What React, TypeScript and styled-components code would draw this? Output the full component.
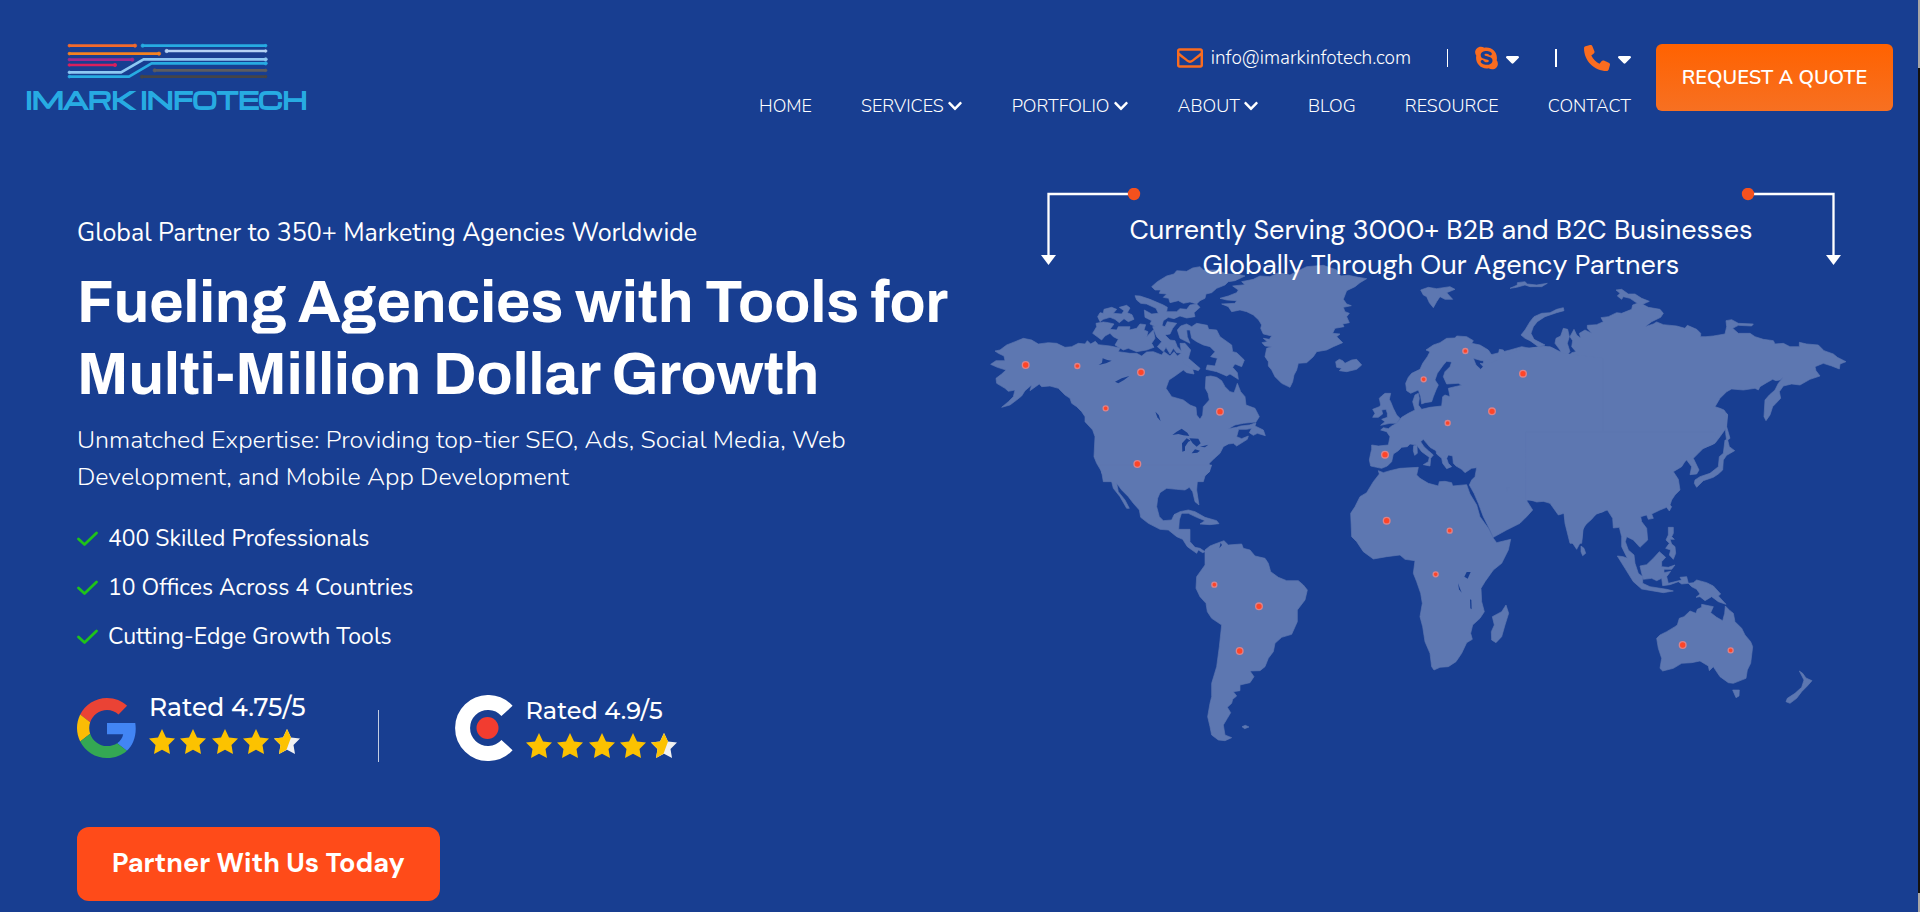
import React from "react";
import styled, { createGlobalStyle } from "styled-components";
import { FaSkype, FaPhone, FaCaretDown } from "react-icons/fa6";
import { FaChevronDown, FaRegEnvelope } from "react-icons/fa";

const colors = {
  page: "#183e91",
  land: "#5d77b1",
  orange: "#fa6c1f",
  cta: "#ff4b19",
  white: "#ffffff",
  check: "#1fc31a",
  star: "#fcc200",
  brand: "#27abe2",
};

const bodyFont = `"Nunito", "Nunito Sans", "Open Sans", "Noto Sans", sans-serif`;
const displayFont = `"DM Sans", Inter, sans-serif`;

const GlobalStyle = createGlobalStyle`
  * { box-sizing: border-box; }
  body {
    margin: 0;
    background: ${colors.page};
    color: ${colors.white};
    font-family: ${bodyFont};
  }
  h1, h2, p, ul { margin: 0; padding: 0; }
  ul { list-style: none; }
  a { color: inherit; text-decoration: none; }
  svg { display: block; flex-shrink: 0; }
`;

const Page = styled.div`
  min-height: 100vh;
  overflow: hidden;
`;

const ScrollTrack = styled.div`
  position: fixed;
  top: 0;
  right: 0;
  bottom: 0;
  width: 2px;
  background: #a9a7a6;
  padding: 68px 0 19px;
`;

const ScrollThumb = styled.div`
  height: 100%;
  background: #14120f;
`;

/* ---------- header ---------- */

const Header = styled.header`
  display: flex;
  align-items: flex-start;
  padding: 44px 27px 0 24px;
`;

const Brand = styled.a`
  display: flex;
  flex-direction: column;
  align-items: center;
  min-width: 285px;
  margin-right: auto;
`;

const BrandName = styled.span`
  font-family: Michroma, Orbitron, "DejaVu Sans", sans-serif;
  font-weight: 700;
  font-size: 23px;
  line-height: 24px;
  margin-top: 5px;
  color: ${colors.brand};
  -webkit-text-stroke: 1px ${colors.brand};
  white-space: nowrap;
`;

const HeaderMiddle = styled.div`
  display: flex;
  flex-direction: column;
  align-items: flex-end;
  margin-right: 25px;
`;

const ContactRow = styled.div`
  display: flex;
  align-items: center;
  height: 28px;
`;

const EmailLink = styled.a`
  display: flex;
  align-items: center;
  gap: 8px;
  font-size: 19px;
  font-weight: 300;
  line-height: 28px;
`;

const Separator = styled.span<{ $thin?: boolean }>`
  width: ${(p) => (p.$thin ? 1 : 2)}px;
  height: 18px;
  margin: 0 27px 0 36px;
  background: ${colors.white};
`;

const IconButton = styled.button`
  display: flex;
  align-items: center;
  gap: 8px;
  padding: 0;
  border: 0;
  background: none;
  color: ${colors.white};
`;

const SkypeIcon = styled(FaSkype)`
  width: 23px;
  height: 26px;
  color: ${colors.orange};
`;

const PhoneIcon = styled(FaPhone)`
  width: 26px;
  height: 26px;
  color: ${colors.orange};
`;

const Caret = styled(FaCaretDown)`
  width: 13px;
  height: 21px;
`;

const NavList = styled.ul`
  display: flex;
  gap: 49px;
  margin-top: 20px;
`;

const NavLink = styled.a`
  display: flex;
  align-items: center;
  gap: 3px;
  font-size: 18px;
  font-weight: 300;
  line-height: 28px;
`;

const QuoteButton = styled.button`
  width: 237px;
  height: 67px;
  border: 0;
  border-radius: 6px;
  background: linear-gradient(#ff6200, #f77022);
  color: ${colors.white};
  font-family: ${bodyFont};
  font-size: 20px;
  font-weight: 600;
  white-space: nowrap;
`;

/* ---------- hero ---------- */

const Hero = styled.main`
  display: grid;
  grid-template-columns: 903fr 875fr;
  padding: 0 65px 10px 77px;
  margin-top: 68px;
`;

const HeroCopy = styled.section`
  padding-top: 27px;
`;

const Kicker = styled.p`
  font-size: 25px;
  line-height: 36px;
`;

const Title = styled.h1`
  margin-top: 15px;
  font-family: Archivo, "Liberation Sans", Arial, sans-serif;
  font-size: 59px;
  font-weight: 700;
  line-height: 72px;
  white-space: nowrap;
`;

const Lead = styled.p`
  margin-top: 12px;
  font-size: 25px;
  font-weight: 300;
  line-height: 37px;
`;

const Perks = styled.ul`
  margin-top: 18px;
`;

const Perk = styled.li`
  display: flex;
  align-items: center;
  gap: 10px;
  font-size: 23px;
  line-height: 49px;
`;

const Ratings = styled.div`
  display: flex;
  align-items: center;
  margin-top: 32px;
`;

const Rating = styled.div`
  display: flex;
  align-items: center;
  gap: 12px;
`;

const RatingText = styled.div<{ $raised?: boolean }>`
  display: flex;
  flex-direction: column;
  gap: 8px;
  font-size: ${(p) => (p.$raised ? 25 : 24)}px;
  padding-bottom: ${(p) => (p.$raised ? 8 : 0)}px;
`;

const RatingLabel = styled.span`
  font-family: "Montserrat", Inter, sans-serif;
  font-weight: 500;
  line-height: 28px;
`;

const RatingDivider = styled.span`
  width: 1px;
  height: 52px;
  margin: 16px 76px 0 72px;
  background: #c3cde2;
`;

const PartnerButton = styled.button`
  width: 363px;
  height: 74px;
  margin-top: 65px;
  padding: 0 0 4px;
  border: 0;
  border-radius: 12px;
  background: ${colors.cta};
  color: ${colors.white};
  font-family: ${displayFont};
  font-size: 27px;
  font-weight: 700;
`;

const Reach = styled.section`
  min-width: 0;
`;

const ReachHead = styled.div`
  position: relative;
  z-index: 1;
  display: flex;
  justify-content: space-between;
  padding: 0 14px 0 61px;
`;

const ReachTitle = styled.h2`
  margin: 24px -60px 0;
  font-family: ${displayFont};
  font-size: 27px;
  font-weight: 400;
  line-height: 35px;
  text-align: center;
`;

const MapDrawing = styled.svg`
  width: 100%;
  height: auto;
  margin-top: -42px;
`;

const logoWires: [string, string, number, number][] = [
  ["#f26a2c", "M207 77H404", 404, 77],
  ["#f58220", "M207 101H476", 476, 101],
  ["#a02a8c", "M207 119H396", 396, 119],
  ["#d91f5d", "M207 135H344", 344, 135],
  ["#8ec7f2", "M207 157H362L430 118H796", 796, 118],
  ["#27abe2", "M207 170H386L454 130H796", 796, 130],
  ["#27abe2", "M427 77H796", 427, 77],
  ["#b5d3f5", "M499 93H796", 499, 93],
  ["#5d5c5e", "M463 151H796", 463, 151],
  ["#454446", "M425 170H796", 425, 170],
];

const LogoMark = () => (
  <svg width="200" height="38" viewBox="200 72 600 114" overflow="visible" aria-hidden="true">
    {logoWires.map(([c, d, x, y]) => (
      <g key={d} stroke={c} fill="none">
        <path d={d} strokeWidth="8" />
        <circle cx={x} cy={y} r="5" fill={c} strokeWidth="2" />
        <circle cx={d.startsWith("M207") ? 207 : 796} cy={d.startsWith("M207") ? +d.split(" ")[1].split("H")[0] : y} r="4" fill={c} strokeWidth="2" />
      </g>
    ))}
  </svg>
);

const Check = () => (
  <svg width="21" height="16" viewBox="0 0 21 16" aria-hidden="true">
    <path d="M1.5 8L7.5 13.5L19.5 2" fill="none" stroke={colors.check} strokeWidth="2.7" strokeLinecap="round" strokeLinejoin="round" />
  </svg>
);

const starPath = "M13 0L17 8.4L26 9.6L19.5 16L21 25L13 20.8L5 25L6.500 16L0 9.600L9 8.400Z";

const Stars = () => (
  <svg width="152" height="25" viewBox="0 0 152 25" role="img" aria-label="Star rating">
    {[0, 31, 63, 94].map((x) => (
      <path key={x} d={starPath} transform={`translate(${x} 0)`} fill={colors.star} />
    ))}
    <g transform="translate(125 0)">
      <path d={starPath} fill="#f1f1f1" />
      <path d="M13 0L17 8.400L12.500 20.800L5 25L6.500 16L0 9.600L9 8.400Z" fill={colors.star} />
    </g>
  </svg>
);

const GoogleLogo = () => (
  <svg width="60" height="60" viewBox="0 0 48 48" role="img" aria-label="Google">
    <path fill="#EA4335" d="M24 9.500c3.540 0 6.710 1.220 9.210 3.600l6.850-6.850C35.900 2.380 30.470 0 24 0 14.620 0 6.510 5.380 2.560 13.220l7.980 6.190C12.430 13.720 17.740 9.500 24 9.500z" />
    <path fill="#4285F4" d="M46.980 24.550c0-1.570-.15-3.090-.38-4.550H24v9.020h12.940c-.58 2.960-2.260 5.480-4.780 7.180l7.730 6c4.510-4.180 7.090-10.360 7.090-17.650z" />
    <path fill="#FBBC05" d="M10.530 28.590c-.48-1.450-.76-2.990-.76-4.590s.27-3.140.76-4.590l-7.980-6.190C.92 16.460 0 20.120 0 24c0 3.880.92 7.540 2.560 10.780l7.970-6.190z" />
    <path fill="#34A853" d="M24 48c6.480 0 11.930-2.130 15.890-5.810l-7.730-6c-2.150 1.450-4.920 2.300-8.160 2.300-6.260 0-11.570-4.220-13.470-9.910l-7.980 6.190C6.510 42.620 14.620 48 24 48z" />
  </svg>
);

const ClutchLogo = () => (
  <svg width="59" height="66" viewBox="0 0 59 66" role="img" aria-label="Clutch">
    <path d="M52 15.900A25.500 25.500 0 1 0 52 50.100" fill="none" stroke="#fff" strokeWidth="15" />
    <circle cx="32.500" cy="33" r="11" fill="#f23c30" />
  </svg>
);

const Bracket = ({ flip }: { flip?: boolean }) => (
  <svg width="100" height="78" viewBox="0 0 100 78" aria-hidden="true">
    <g transform={flip ? "translate(100 0) scale(-1 1)" : undefined}>
      <path d="M93 6H7.500V68" fill="none" stroke="#fff" strokeWidth="2.300" />
      <path d="M0 67H15L7.500 77Z" fill="#fff" />
      <circle cx="93" cy="6" r="6.200" fill="#f4511e" />
    </g>
  </svg>
);

/* Each region keeps its own origin and is drawn at three units per map pixel. */
type Region = {
  x: number;
  y: number;
  land: string[];
  water?: string[];
  pins: [number, number, 0 | 1][];
};

const regions: Region[] = [
  {
    x: 970,
    y: 170,
    land: [
      "75 543 90 540 110 525 135 515 160 505 185 510 205 522 235 518 260 520 285 532 305 530 325 520 345 522 352 512 362 522 376 514 385 524 420 528 450 534 445 545 480 550 500 550 515 558 530 546 550 545 575 555 582 545 600 558 612 545 622 558 640 545 650 565 645 578 665 585 682 600 668 598 672 612 650 608 640 600 615 618 597 630 588 655 605 680 640 690 660 705 678 712 680 735 690 748 698 735 700 710 718 690 714 670 706 655 708 620 722 618 740 622 755 632 765 650 780 665 792 668 797 655 802 640 812 665 825 680 828 705 855 715 868 740 858 756 820 760 795 765 775 776 800 772 812 768 838 765 858 758 855 768 880 780 886 797 862 790 850 796 838 788 845 775 830 778 806 778 800 800 815 806 835 798 832 808 800 828 790 820 775 822 760 830 750 850 732 866 718 880 718 905 705 918 700 935 400 935 395 905 380 880 372 860 375 800 368 780 345 755 345 740 335 725 320 710 305 700 300 685 285 675 265 655 240 648 215 650 208 642 180 662 185 645 165 662 155 678 140 690 120 705 95 712 115 695 130 680 135 660 115 664 105 655 80 640 78 625 95 612 108 600 82 592 62 583 78 572 105 572 102 558 85 550",
      "368 490 380 470 378 460 400 456 415 458 432 462 420 478 440 480 445 470 480 470 478 480 500 475 510 462 527 464 522 480 534 485 530 500 550 480 555 505 545 520 552 532 530 540 500 545 475 535 460 540 435 525 445 508 430 500 420 490 405 498 395 510",
      "383 440 390 428 400 430 402 418 425 412 440 418 430 430 455 432 462 422 448 412 470 406 480 414 472 428 486 434 492 448 475 455 462 446 448 458 435 448 420 442 400 448 390 455",
      "495 377 510 378 540 388 580 405 592 412 590 425 620 425 630 416 650 418 660 405 680 402 690 412 672 428 675 440 650 444 630 438 612 446 595 442 580 452 575 470 560 472 540 462 545 452 525 442 523 420 545 432 565 430 558 415 530 402 512 400 500 390",
      "545 350 562 335 590 318 612 312 620 302 650 304 668 294 690 290 700 300 740 300 770 312 800 312 825 318 795 332 775 335 765 345 740 355 725 368 708 372 705 385 690 392 680 402 660 396 640 400 625 392 600 398 596 385 580 382 590 372 568 370 572 360 555 360",
      "548 470 570 465 585 470 592 455 620 460 608 475 600 492 585 495 600 510 615 512 622 530 640 550 620 548 610 535 600 552 588 532 580 545 562 530 575 515 560 500",
      "622 480 632 468 650 462 665 470 680 460 712 466 716 478 740 480 750 500 785 525 788 545 800 548 823 570 815 590 795 582 788 592 802 608 805 628 780 612 770 618 740 605 708 598 712 585 735 588 742 565 722 560 735 545 720 530 700 525 680 515 665 505 660 480 650 480 652 500 660 520 630 505",
      "630 520 645 520 662 540 655 565 690 595 685 602 660 592 640 580",
      "750 385 775 378 800 368 805 360 788 348 825 344 815 335 850 328 870 318 900 320 925 308 960 315 990 300 1010 290 1060 286 1100 300 1112 318 1135 316 1165 322 1190 326 1170 338 1155 350 1130 362 1125 375 1120 388 1130 402 1144 407 1120 412 1125 425 1138 430 1130 440 1138 458 1118 462 1122 470 1095 475 1088 490 1110 492 1100 500 1118 518 1090 530 1070 540 1040 545 1030 560 1010 578 985 580 980 600 972 615 968 635 960 652 935 640 915 620 905 600 895 588 895 575 885 560 890 535 905 530 885 528 876 518 892 515 880 505 898 508 905 498 880 492 872 475 875 465 866 450 850 435 830 425 810 420 785 425 775 410 755 402 795 400 800 392 770 390",
      "1097 575 1108 568 1118 572 1125 580 1145 570 1160 568 1175 585 1160 598 1130 605 1108 602 1115 595 1100 592",
      "1352 360 1375 352 1400 356 1440 350 1455 358 1430 368 1448 388 1425 388 1410 380 1400 395 1390 413 1378 398 1370 380 1360 375",
    ],
    water: [
      "607 795 620 785 635 776 652 788 658 798 640 796 625 792",
      "637 845 636 820 650 805 662 812 655 815 645 830 645 842",
      "658 805 685 806 692 820 680 830 668 820",
      "665 850 675 838 690 842 682 848",
      "690 830 715 824 705 832",
      "556 725 566 735 572 754 562 742",
      "435 635 455 625 478 618 462 630 445 640",
      "386 585 396 578 398 565 412 570 425 572 408 580",
    ],
    pins: [[167, 585, 1], [513, 607, 1], [750, 725, 1], [502, 882, 1], [322, 588, 0], [407, 715, 0]],
  },
  {
    x: 1430,
    y: 170,
    land: [
      "160 560 240 540 275 530 300 535 340 528 370 535 388 550 400 562 390 540 375 520 378 505 392 498 400 475 413 478 418 500 412 520 420 545 400 566 410 565 425 548 438 545 425 530 428 512 420 500 432 478 440 495 452 505 448 490 465 480 485 490 472 475 472 466 500 464 520 455 513 443 535 440 560 428 575 430 605 418 608 405 622 400 600 385 580 380 575 388 562 378 570 370 558 360 575 358 595 372 615 372 635 385 658 394 638 403 655 412 690 418 700 430 692 442 665 455 645 470 670 462 680 456 700 464 740 468 765 475 772 466 800 478 812 490 812 500 828 500 850 498 885 492 890 470 888 452 905 449 925 460 970 462 965 468 925 466 908 475 925 490 960 490 975 500 1000 508 1030 512 1035 522 1060 520 1080 530 1108 530 1108 517 1130 522 1165 525 1182 542 1210 552 1222 562 1248 575 1230 582 1228 597 1205 588 1180 580 1155 590 1158 602 1170 618 1140 628 1110 645 1085 642 1060 648 1048 665 1052 685 1038 700 1028 710 1020 735 1008 752 1002 740 1005 690 1018 675 1035 660 1045 640 1060 622 1050 630 1038 632 1028 628 1010 638 990 650 985 660 975 655 940 660 905 657 890 665 870 685 855 710 870 715 882 720 893 735 888 775 870 800 855 820 820 835 160 835",
      "273 495 285 480 300 455 312 440 335 430 360 428 380 418 400 413 402 422 380 428 345 440 322 455 310 470 303 490 312 508 345 525 325 530 300 512 285 505",
      "240 355 262 345 262 338 285 335 292 342 320 345 352 340 335 350 300 350 285 345 260 352",
      "885 730 892 732 890 770 900 805 890 812 887 790",
    ],
    pins: [],
  },
  {
    x: 1350,
    y: 330,
    land: [
      "167 160 175 142 185 130 210 118 218 100 232 80 240 65 228 60 250 45 270 38 290 25 315 24 320 18 350 20 370 32 365 40 390 45 415 60 425 75 418 88 395 92 370 85 378 105 392 118 400 110 390 100 410 102 430 95 455 85 445 75 448 58 460 60 465 72 480 70 500 60 530 55 560 52 600 50 640 70 760 85 760 545 740 550 725 568 700 590 695 640 660 640 650 600 645 580 642 550 625 555 600 520 580 514 560 516 535 508 520 515 515 520 490 524 482 500 470 485 470 475 480 475 490 492 505 500 528 505 532 515 548 540 530 560 510 580 470 600 430 622 420 600 400 560 385 520 372 490 358 465 365 450 375 440 380 413 365 415 345 428 335 418 318 408 310 400 308 378 295 375 290 385 295 400 305 410 290 416 278 400 275 385 260 372 258 362 240 352 230 340 220 328 212 335 222 350 235 362 250 375 242 385 240 408 220 404 235 395 238 382 215 365 200 345 180 342 172 350 155 352 145 362 130 372 125 395 112 408 95 415 80 412 62 408 58 390 62 370 65 358 65 345 85 348 115 345 120 320 110 305 92 300 100 293 115 296 125 288 140 280 155 262 175 250 195 240 188 215 195 195 205 190 208 205 205 225 215 238 240 232 275 228 278 200 285 195 300 200 295 175 315 170 335 166 325 160 290 162 280 140 285 125 300 110 305 96 290 94 280 105 262 130 255 150 265 165 258 180 250 200 245 215 225 218 215 222 212 200 205 180 182 190 170 182",
      "68 262 75 250 68 238 88 230 92 225 88 205 95 198 105 190 122 190 118 208 122 215 130 235 140 255 150 265 140 280 120 280 92 286 105 275 95 268 112 262 112 250 108 238 95 240 98 252 85 262",
      "191 347 201 345 202 370 194 376 190 362",
    ],
    pins: [[221, 148, 0], [105, 374, 1], [293, 279, 0], [346, 63, 0], [519, 131, 1], [426, 244, 1]],
  },
  {
    x: 1100,
    y: 470,
    land: [
      "835 2 850 8 870 2 900 -5 955 -8 950 15 960 25 985 40 1015 48 1018 35 1035 34 1055 38 1058 48 1100 44 1110 72 1130 105 1140 140 1165 175 1180 205 1190 218 1232 208 1225 240 1205 280 1180 300 1155 335 1143 355 1145 395 1153 425 1140 445 1118 465 1112 490 1117 508 1100 518 1085 550 1068 575 1045 590 1020 592 1002 600 995 590 990 550 975 515 968 470 960 440 967 400 962 370 950 335 940 310 945 272 915 268 900 255 860 260 820 267 790 245 770 215 755 200 752 130 765 110 780 80 800 68 820 35 838 12",
      "1218 405 1226 430 1215 465 1205 500 1188 518 1175 510 1174 485 1183 465 1177 440 1205 425",
      "0 -15 335 -15 328 6 305 20 292 35 290 60 297 105 285 95 278 65 268 52 255 60 230 58 200 55 180 68 173 85 170 110 178 140 190 152 215 150 222 135 245 128 238 150 236 178 270 178 270 215 285 232 300 235 315 245 308 248 295 240 290 250 262 230 248 208 230 200 205 180 180 178 145 160 122 142 118 120 100 100 85 80 65 60 50 40 55 65 75 90 88 115 80 115 60 80 40 55 35 35 5 10",
      "222 134 240 125 265 120 285 125 315 142 350 152 357 161 330 164 300 162 315 152 290 142 265 130 245 130",
      "315 240 330 228 345 222 372 212 385 225 425 222 430 235 450 240 465 258 495 265 505 280 512 305 535 322 560 332 595 332 610 345 622 360 615 390 592 420 592 455 575 493 545 502 525 520 520 545 505 565 495 590 480 602 450 603 462 620 450 638 420 645 420 662 400 665 410 678 398 688 395 700 382 712 392 728 382 745 370 765 375 795 395 803 375 812 355 810 335 795 330 770 323 740 330 700 335 680 335 640 350 590 358 530 365 465 335 445 322 425 318 400 300 380 288 355 290 320 315 285",
      "426 770 436 766 447 771 434 776",
    ],
    water: ["1093 320 1100 306 1112 306 1103 326", "1074 340 1085 368 1077 358", "1110 388 1114 390 1115 418 1111 415", "358 235 362 218 366 225"],
    pins: [[860, 152, 1], [1049, 182, 0], [1007, 313, 0], [343, 344, 0], [477, 409, 1], [419, 543, 1]],
  },
  {
    x: 1500,
    y: 440,
    land: [
      "78 -25 645 -25 650 0 640 12 610 25 595 40 580 55 597 90 590 102 570 104 575 80 560 60 545 72 525 78 535 65 512 68 535 58 548 46 535 62 560 56 545 80 520 95 535 118 540 150 525 165 515 180 510 195 515 200 508 213 500 202 480 210 455 222 460 235 445 238 440 225 422 230 425 245 440 265 443 300 420 322 400 300 380 290 376 305 385 330 402 345 405 370 415 400 428 410 428 430 450 440 500 448 520 453 490 458 425 447 400 425 375 385 352 348 370 350 382 355 365 320 365 290 358 262 340 264 338 235 322 210 290 222 265 240 248 270 245 300 230 328 215 305 200 260 192 215 180 222 165 205 150 185 120 182 78 180",
      "583 130 585 120 600 110 630 100 655 80 658 50 670 40 675 0 683 0 688 20 704 32 680 46 670 60 668 90 655 102 640 112 610 122 590 142",
      "243 318 252 325 257 340 248 347 243 335",
      "505 262 520 262 520 280 515 290 523 298 510 298 515 312 525 320 527 340 520 358 508 345 512 330 497 325 508 310 498 300 505 285",
      "420 378 440 374 460 355 478 335 497 352 485 365 485 380 505 382 525 375 515 388 492 388 492 398 512 394 500 410 505 430 545 420 540 412 560 410 565 430 545 432 535 425 510 434 488 437 485 415 470 422 455 415 430 418 425 400",
      "565 430 580 428 590 420 620 428 640 438 662 462 655 468 678 493 655 485 635 470 615 482 600 470 588 472 600 462 590 448 575 440",
      "470 595 480 585 500 575 525 560 532 555 538 535 552 530 570 513 588 520 592 508 605 502 605 493 640 500 632 518 650 532 668 542 674 520 676 498 690 512 700 520 705 545 725 565 735 585 752 605 758 620 752 670 742 690 738 715 700 730 685 728 660 710 645 688 640 680 628 692 625 678 600 663 575 668 545 670 520 685 488 693 480 685 485 655 475 625",
      "698 750 718 750 717 768 708 773",
      "898 693 908 700 918 714 936 722 922 738 905 755 890 775 870 790 858 785 862 775 885 760 905 742 912 720",
    ],
    pins: [[548, 615, 1], [692, 631, 0]],
  },
];

const WorldMap = () => (
  <MapDrawing viewBox="980 240 875 530" role="img" aria-label="World map of client locations">
    {regions.map((r) => (
      <g key={`${r.x}-${r.y}`} transform={`translate(${r.x} ${r.y}) scale(.33333)`}>
        {r.land.map((p) => (
          <polygon key={p} points={p} fill={colors.land} stroke={colors.land} strokeWidth="2" strokeLinejoin="round" />
        ))}
        {r.water?.map((p) => (
          <polygon key={p} points={p} fill={colors.page} />
        ))}
      </g>
    ))}
    {regions.map((r) => (
      <g key={`pins-${r.x}-${r.y}`} transform={`translate(${r.x} ${r.y}) scale(.33333)`}>
        {r.pins.map(([x, y, big]) => (
          <circle key={`${x}-${y}`} cx={x} cy={y} r={big ? 10 : 7.5} fill="#ff4527" stroke="#dc8289" strokeWidth="4" />
        ))}
      </g>
    ))}
  </MapDrawing>
);

const navItems = [
  { label: "HOME" },
  { label: "SERVICES", menu: true },
  { label: "PORTFOLIO", menu: true },
  { label: "ABOUT", menu: true },
  { label: "BLOG" },
  { label: "RESOURCE" },
  { label: "CONTACT" },
];

const perks = [
  "400 Skilled Professionals",
  "10 Offices Across 4 Countries",
  "Cutting-Edge Growth Tools",
];

export default function App() {
  return (
    <Page>
      <GlobalStyle />
      <Header>
        <Brand href="#">
          <LogoMark />
          <BrandName>IMARK INFOTECH</BrandName>
        </Brand>
        <HeaderMiddle>
          <ContactRow>
            <EmailLink href="mailto:info@imarkinfotech.com">
              <FaRegEnvelope size={26} color={colors.orange} />
              info@imarkinfotech.com
            </EmailLink>
            <Separator $thin />
            <IconButton type="button" aria-label="Skype">
              <SkypeIcon />
              <Caret />
            </IconButton>
            <Separator />
            <IconButton type="button" aria-label="Phone">
              <PhoneIcon />
              <Caret />
            </IconButton>
          </ContactRow>
          <nav>
            <NavList>
              {navItems.map((item) => (
                <li key={item.label}>
                  <NavLink href="#">
                    {item.label}
                    {item.menu && <FaChevronDown size={16} />}
                  </NavLink>
                </li>
              ))}
            </NavList>
          </nav>
        </HeaderMiddle>
        <QuoteButton type="button">REQUEST A QUOTE</QuoteButton>
      </Header>

      <Hero>
        <HeroCopy>
          <Kicker>Global Partner to 350+ Marketing Agencies Worldwide</Kicker>
          <Title>
            Fueling Agencies with Tools for
            <br />
            Multi-Million Dollar Growth
          </Title>
          <Lead>
            Unmatched Expertise: Providing top-tier SEO, Ads, Social Media, Web
            <br />
            Development, and Mobile App Development
          </Lead>
          <Perks>
            {perks.map((perk) => (
              <Perk key={perk}>
                <Check />
                {perk}
              </Perk>
            ))}
          </Perks>
          <Ratings>
            <Rating>
              <GoogleLogo />
              <RatingText $raised>
                <RatingLabel>Rated 4.75/5</RatingLabel>
                <Stars />
              </RatingText>
            </Rating>
            <RatingDivider />
            <Rating>
              <ClutchLogo />
              <RatingText>
                <RatingLabel>Rated 4.9/5</RatingLabel>
                <Stars />
              </RatingText>
            </Rating>
          </Ratings>
          <PartnerButton type="button">Partner With Us Today</PartnerButton>
        </HeroCopy>
        <Reach>
          <ReachHead>
            <Bracket />
            <ReachTitle>
              Currently Serving 3000+ B2B and B2C Businesses
              <br />
              Globally Through Our Agency Partners
            </ReachTitle>
            <Bracket flip />
          </ReachHead>
          <WorldMap />
        </Reach>
      </Hero>
      <ScrollTrack>
        <ScrollThumb />
      </ScrollTrack>
    </Page>
  );
}
